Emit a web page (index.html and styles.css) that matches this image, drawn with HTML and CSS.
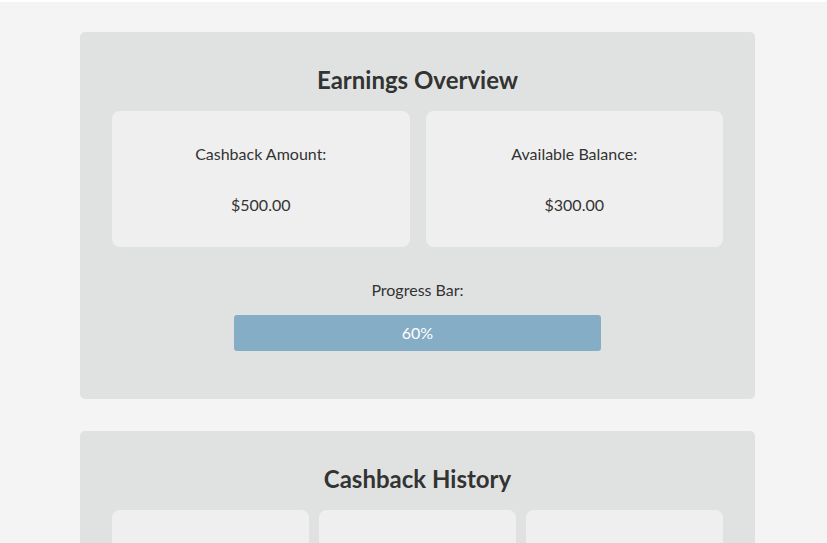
FILE: index.html
```html
<!DOCTYPE html>
<html>
<head>
<meta charset="utf-8">
<link rel="stylesheet" href="styles.css">
</head>
<body>
<div class="page">
  <section class="panel">
    <h2 class="title">Earnings Overview</h2>
    <div class="cards two">
      <div class="card">
        <p class="label">Cashback Amount:</p>
        <p class="value">$500.00</p>
      </div>
      <div class="card">
        <p class="label">Available Balance:</p>
        <p class="value">$300.00</p>
      </div>
    </div>
    <div class="progress">
      <p class="plabel">Progress Bar:</p>
      <div class="bar">60%</div>
    </div>
  </section>
  <section class="panel">
    <h2 class="title">Cashback History</h2>
    <div class="cards three">
      <div class="card tall"></div>
      <div class="card tall"></div>
      <div class="card tall"></div>
    </div>
  </section>
</div>
</body>
</html>
```
FILE: styles.css
```css
html { background: #ffffff; }
body {
  margin: 0;
  margin-top: 2px;
  background: #f4f4f4;
  font-family: Lato, "Open Sans", sans-serif;
  color: #333333;
  min-height: 541px;
}
.page {
  width: 675px;
  margin: 0 0 0 80px;
  padding-top: 30px;
  display: flex;
  flex-direction: column;
  gap: 32px;
}
.panel {
  background: #e0e2e1;
  border-radius: 5px;
  padding: 33px 32px 32px;
}
.title {
  margin: 0 0 16px;
  text-align: center;
  font-size: 24px;
  line-height: 30px;
  font-weight: 700;
}
.cards {
  display: flex;
}
.cards.two { gap: 16px; }
.cards.three { gap: 10px; }
.card {
  flex: 1;
  background: #efefef;
  border-radius: 8px;
  padding: 33px 16px 32px;
  text-align: center;
}
.card.tall { height: 100px; }
.label, .value {
  margin: 0;
  font-size: 16px;
  line-height: 20px;
}
.value { margin-top: 31px; }
.progress {
  text-align: center;
  padding-top: 33px;
  padding-bottom: 16px;
}
.plabel {
  margin: 0 0 15px;
  font-size: 16px;
  line-height: 20px;
}
.bar {
  width: 60%;
  margin: 0 auto;
  height: 36px;
  line-height: 36px;
  background: #85adc5;
  color: #ffffff;
  border-radius: 3px;
  font-size: 16px;
}
```
